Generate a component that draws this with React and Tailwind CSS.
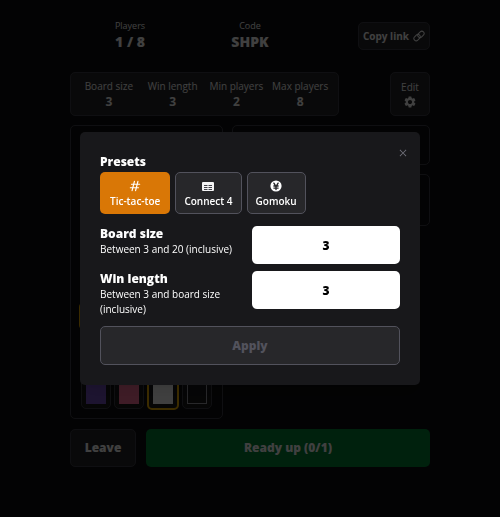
import { AiOutlineClose } from "react-icons/ai";
import { MdSettings } from "react-icons/md";
import { HiOutlineHashtag, HiCurrencyYen } from "react-icons/hi";

function TableIcon() {
  return (
    <svg width="14" height="14" viewBox="0 0 14 14" aria-hidden="true">
      <rect x="1" y="3" width="12" height="9" rx="1" fill="#f4f4f5" />
      <path d="M3 6h3.5v1H3zM7.5 6H11v1H7.5zM3 8h3.5v1H3zM7.5 8H11v1H7.5zM3 10h3.5v1H3zM7.5 10H11v1H7.5z" fill="#3f3f46" />
    </svg>
  );
}

function LinkIcon() {
  return (
    <svg width="12" height="12" viewBox="0 0 24 24" fill="none" stroke="currentColor" strokeWidth="2" aria-hidden="true">
      <g transform="rotate(-45 12 12)">
        <rect x="0" y="7" width="14" height="9" rx="4.5" />
        <rect x="10" y="8" width="14" height="9" rx="4.5" />
      </g>
    </svg>
  );
}

const settings = [
  ["Board size", "3"],
  ["Win length", "3"],
  ["Min players", "2"],
  ["Max players", "8"],
];

const colors = ["bg-[#7450c0]", "bg-[#fb719a]", "bg-white", "bg-zinc-900 border border-zinc-400"];

const presets = [
  { name: "Tic-tac-toe", Icon: HiOutlineHashtag, active: true },
  { name: "Connect 4", Icon: TableIcon, active: false },
  { name: "Gomoku", Icon: HiCurrencyYen, active: false },
];

function Stat({ label, value }) {
  return (
    <div className="text-center">
      <div className="text-[9px] leading-3">{label}</div>
      <div className="text-sm leading-5 font-extrabold">{value}</div>
    </div>
  );
}

function Lobby() {
  return (
    <main className="mx-auto flex w-full max-w-[360px] flex-col pt-5">
      <header className="grid h-8 grid-cols-3 items-center">
        <Stat label="Players" value="1 / 8" />
        <Stat label="Code" value="SHPK" />
        <button className="flex h-7 items-center gap-1 justify-self-end rounded-[5px] border border-zinc-700 bg-zinc-800 px-1 text-[10px] font-bold">
          Copy link <LinkIcon />
        </button>
      </header>

      <section className="mt-5 flex items-stretch justify-between">
        <dl className="grid h-11 w-[269px] grid-cols-4 items-center rounded-[5px] border border-zinc-700 bg-zinc-800 px-1.5 text-center">
          {settings.map(([label, value]) => (
            <div key={label}>
              <dt className="text-[10px] leading-4 whitespace-nowrap">{label}</dt>
              <dd className="text-xs leading-4 font-bold">{value}</dd>
            </div>
          ))}
        </dl>
        <button className="flex w-10 flex-col items-center justify-center rounded-[5px] border border-zinc-700 bg-zinc-800 text-[10px] leading-4 font-medium">
          Edit
          <MdSettings size={14} />
        </button>
      </section>

      <section className="mt-[9px] flex items-start gap-[9px]">
        <div className="flex h-[294px] w-[153px] flex-col justify-end rounded-[5px] border border-zinc-700 px-2 pb-2">
          <div className="mb-11 flex">
            <span className="h-7 w-8 rounded-[5px] border-2 border-yellow-500" />
          </div>
          <div className="flex items-center justify-between px-0.5">
            {colors.map((color, index) => (
              <button
                key={color}
                aria-label={`Colour ${index + 1}`}
                className={
                  index === 2
                    ? "rounded-[5px] border-2 border-yellow-500 bg-zinc-900 p-1"
                    : "rounded-[5px] border border-zinc-700 bg-zinc-900 p-1"
                }
              >
                <span className={`block h-6 w-5 ${color}`} />
              </button>
            ))}
          </div>
        </div>
        <div className="flex flex-1 flex-col gap-[9px]">
          <div className="h-10 rounded-[5px] border border-zinc-700" />
          <div className="h-[52px] rounded-[5px] border border-zinc-700" />
        </div>
      </section>

      <footer className="mt-2.5 flex h-[38px] gap-2.5">
        <button className="w-[66px] rounded-[5px] border border-zinc-700 bg-zinc-800 text-xs font-extrabold">Leave</button>
        <button className="flex-1 rounded-[5px] bg-green-700 text-xs font-extrabold">Ready up (0/1)</button>
      </footer>
    </main>
  );
}

function NumberField({ id, label, hint }) {
  return (
    <div className="grid grid-cols-2 gap-1">
      <label htmlFor={id}>
        <span className="block text-xs leading-4 font-extrabold">{label}</span>
        <span className="block text-[10px] leading-[15px]">{hint}</span>
      </label>
      <input
        id={id}
        defaultValue="3"
        inputMode="numeric"
        className="h-[38px] w-full rounded-[5px] bg-white text-center text-xs font-extrabold text-black"
      />
    </div>
  );
}

function GameDialog() {
  return (
    <div className="fixed inset-0 flex items-center justify-center bg-black/75">
      <div
        role="dialog"
        aria-modal="true"
        aria-label="Edit game settings"
        className="relative w-[340px] rounded-[5px] bg-zinc-900 p-5 shadow-lg"
      >
        <button aria-label="Close" className="absolute top-4 right-3 text-zinc-500">
          <AiOutlineClose size={10} />
        </button>
        <h2 className="text-xs leading-5 font-extrabold">Presets</h2>
        <div className="flex gap-[5px]">
          {presets.map(({ name, Icon, active }) => (
            <button
              key={name}
              className={
                active
                  ? "flex h-[42px] flex-col items-center justify-center gap-0.5 rounded-[5px] bg-[#d97706] px-2.5 text-[10px] leading-3 font-semibold"
                  : "flex h-[42px] flex-col items-center justify-center gap-0.5 rounded-[5px] border border-zinc-600 bg-zinc-800 px-2 text-[10px] leading-3 font-semibold"
              }
            >
              <Icon size={14} />
              {name}
            </button>
          ))}
        </div>
        <div className="mt-3 flex flex-col gap-[7px]">
          <NumberField id="board-size" label="Board size" hint="Between 3 and 20 (inclusive)" />
          <NumberField id="win-length" label="Win length" hint="Between 3 and board size (inclusive)" />
        </div>
        <button disabled className="mt-[9px] h-[39px] w-full rounded-[5px] border border-zinc-600 bg-zinc-800 text-xs font-extrabold text-zinc-600">
          Apply
        </button>
      </div>
    </div>
  );
}

export default function App() {
  return (
    <div className="min-h-screen bg-[#0d0d10] font-['Open_Sans','Noto_Sans',sans-serif] text-white">
      <Lobby />
      <GameDialog />
    </div>
  );
}
